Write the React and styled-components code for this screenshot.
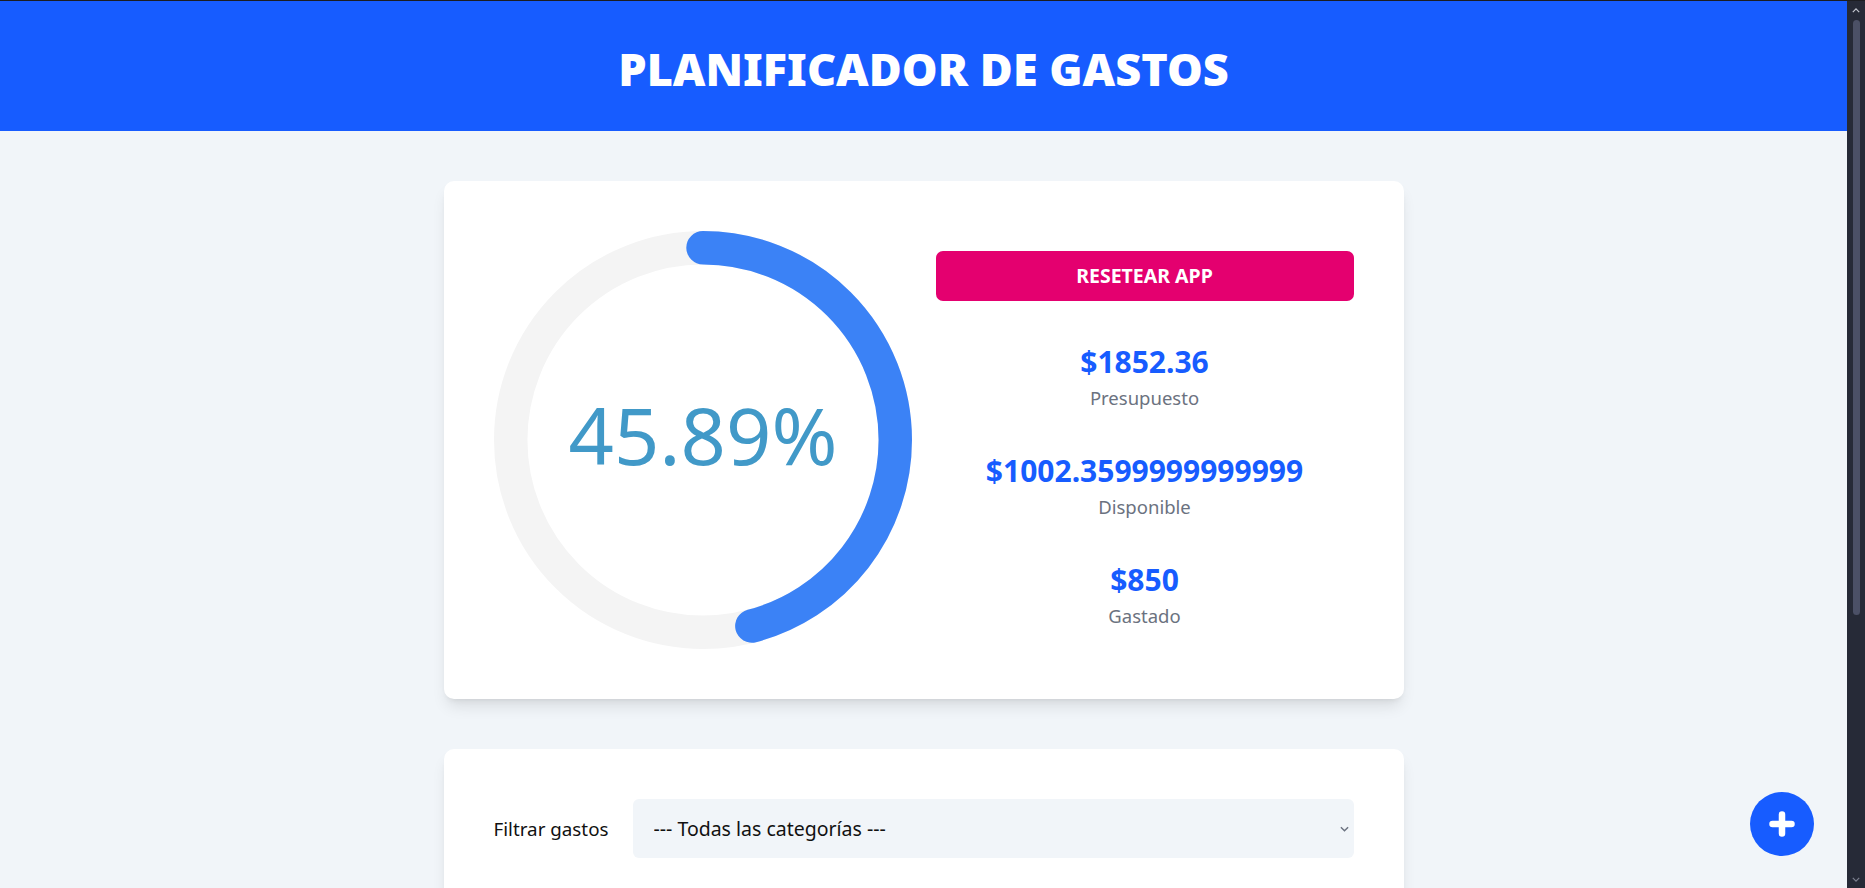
import React from 'react';
import styled, { createGlobalStyle } from 'styled-components';

const presupuesto = 1852.36;
const gastado = 850;
const disponible = presupuesto - gastado;
const porcentaje = ((gastado / presupuesto) * 100).toFixed(2);

const App = () => {
  const radius = 46;
  const circumference = 2 * Math.PI * radius;
  const offset = circumference * (1 - porcentaje / 100);

  return (
    <>
      <GlobalStyle />
      <Shell>
        <Page>
          <Header>
            <Title>Planificador de Gastos</Title>
          </Header>

          <Main>
            <BudgetCard>
              <Progress viewBox="0 0 100 100">
                <circle cx="50" cy="50" r={radius} fill="none" stroke="#f4f4f4" strokeWidth="8" />
                <circle
                  cx="50"
                  cy="50"
                  r={radius}
                  fill="none"
                  stroke="#3b82f6"
                  strokeWidth="8"
                  strokeLinecap="round"
                  strokeDasharray={circumference}
                  strokeDashoffset={offset}
                  transform="rotate(-90 50 50)"
                />
                <PercentText x="50" y="48.6">
                  {porcentaje}%
                </PercentText>
              </Progress>

              <Summary>
                <ResetButton type="button">Resetear App</ResetButton>
                <Stats>
                  <Stat>
                    <Amount>${presupuesto}</Amount>
                    <Label>Presupuesto</Label>
                  </Stat>
                  <Stat>
                    <Amount>${disponible}</Amount>
                    <Label>Disponible</Label>
                  </Stat>
                  <Stat>
                    <Amount>${gastado}</Amount>
                    <Label>Gastado</Label>
                  </Stat>
                </Stats>
              </Summary>
            </BudgetCard>

            <FilterCard>
              <FilterLabel htmlFor="filtro">Filtrar gastos</FilterLabel>
              <SelectWrap>
                <Select id="filtro" defaultValue="">
                  <option value="">--- Todas las categorías ---</option>
                  <option value="ahorro">Ahorro</option>
                  <option value="comida">Comida</option>
                  <option value="casa">Casa</option>
                </Select>
                <Chevron viewBox="0 0 10 6">
                  <path d="M1 1l4 4 4-4" fill="none" stroke="#6b7280" strokeWidth="1.6" />
                </Chevron>
              </SelectWrap>
            </FilterCard>
          </Main>

          <AddButton type="button" aria-label="Nuevo gasto">
            <svg width="26" height="26" viewBox="0 0 26 26">
              <path d="M13 3.5v19M3.5 13h19" stroke="#fff" strokeWidth="6.5" strokeLinecap="round" />
            </svg>
          </AddButton>
        </Page>

        <ScrollRail>
          <RailArrow viewBox="0 0 10 6">
            <path d="M1 5l4-4 4 4" fill="none" stroke="#c4c7d0" strokeWidth="1.5" />
          </RailArrow>
          <Thumb />
          <RailArrow viewBox="0 0 10 6">
            <path d="M1 1l4 4 4-4" fill="none" stroke="#7d8190" strokeWidth="1.5" />
          </RailArrow>
        </ScrollRail>
      </Shell>
    </>
  );
};

const GlobalStyle = createGlobalStyle`
  * {
    box-sizing: border-box;
  }
  html, body {
    margin: 0;
    height: 100%;
    overflow: hidden;
  }
  body {
    font-family: "Noto Sans", "Open Sans", sans-serif;
    background-color: #f1f5f9;
  }
`;

const Shell = styled.div`
  display: flex;
  height: 100vh;
  border-top: 1px solid #1c1d21;
`;

const Page = styled.div`
  flex: 1;
  position: relative;
  overflow: hidden;
  background-color: #f1f5f9;
`;

const Header = styled.header`
  background-color: #175cff;
  height: 130px;
  display: flex;
  align-items: center;
  justify-content: center;
  padding-top: 4px;
`;

const Title = styled.h1`
  margin: 0;
  color: white;
  font-size: 45px;
  font-weight: 900;
  text-transform: uppercase;
  line-height: 1;
`;

const Main = styled.main`
  width: 960px;
  margin: 0 auto;
  padding-top: 50px;
  display: flex;
  flex-direction: column;
  gap: 50px;
`;

const Card = styled.section`
  background-color: white;
  border-radius: 10px;
  box-shadow: 0 10px 15px -3px rgba(0, 0, 0, 0.1), 0 4px 6px -4px rgba(0, 0, 0, 0.1);
  padding: 50px;
`;

const BudgetCard = styled(Card)`
  display: grid;
  grid-template-columns: 1fr 1fr;
  gap: 24px;
`;

const Progress = styled.svg`
  width: 418px;
  height: 418px;
  display: block;
`;

const PercentText = styled.text`
  font-family: "Noto Sans", sans-serif;
  font-size: 19px;
  fill: #4199c8;
  text-anchor: middle;
  dominant-baseline: central;
`;

const Summary = styled.div`
  display: flex;
  flex-direction: column;
  justify-content: center;
`;

const ResetButton = styled.button`
  height: 50px;
  width: 100%;
  border: none;
  border-radius: 7px;
  background-color: #e4006f;
  color: white;
  font-family: inherit;
  font-size: 19.5px;
  font-weight: 700;
  text-transform: uppercase;
  cursor: pointer;
`;

const Stats = styled.div`
  margin-top: 43px;
  display: flex;
  flex-direction: column;
  gap: 41px;
`;

const Stat = styled.div`
  display: flex;
  flex-direction: column;
  align-items: center;
  gap: 4px;
`;

const Amount = styled.p`
  margin: 0;
  color: #175cff;
  font-size: 30px;
  font-weight: 700;
  line-height: 36px;
`;

const Label = styled.p`
  margin: 0;
  color: #6b7280;
  font-size: 18.5px;
  line-height: 28px;
`;

const FilterCard = styled(Card)`
  display: flex;
  align-items: center;
  gap: 24px;
`;

const FilterLabel = styled.label`
  font-size: 18.8px;
  color: #111;
`;

const SelectWrap = styled.div`
  flex: 1;
  position: relative;
`;

const Select = styled.select`
  width: 100%;
  height: 59px;
  appearance: none;
  border: none;
  border-radius: 6px;
  background-color: #f1f5f9;
  padding: 0 21px;
  font-family: inherit;
  font-size: 19.5px;
  color: #111;
`;

const Chevron = styled.svg`
  position: absolute;
  right: 5px;
  top: 27px;
  width: 9px;
  height: 6px;
  pointer-events: none;
`;

const AddButton = styled.button`
  position: absolute;
  right: 33px;
  bottom: 32px;
  width: 64px;
  height: 64px;
  border: none;
  border-radius: 50%;
  background-color: #175cff;
  display: flex;
  align-items: center;
  justify-content: center;
  cursor: pointer;
`;

const ScrollRail = styled.div`
  width: 18px;
  background-color: #262a37;
  display: flex;
  flex-direction: column;
  align-items: center;
  padding: 7px 0 6px;
`;

const RailArrow = styled.svg`
  width: 8px;
  height: 5px;
  flex-shrink: 0;
`;

const Thumb = styled.div`
  width: 7px;
  height: 595px;
  margin-top: 7px;
  margin-bottom: auto;
  border-radius: 4px;
  background-color: #4b5066;
`;

export default App;
